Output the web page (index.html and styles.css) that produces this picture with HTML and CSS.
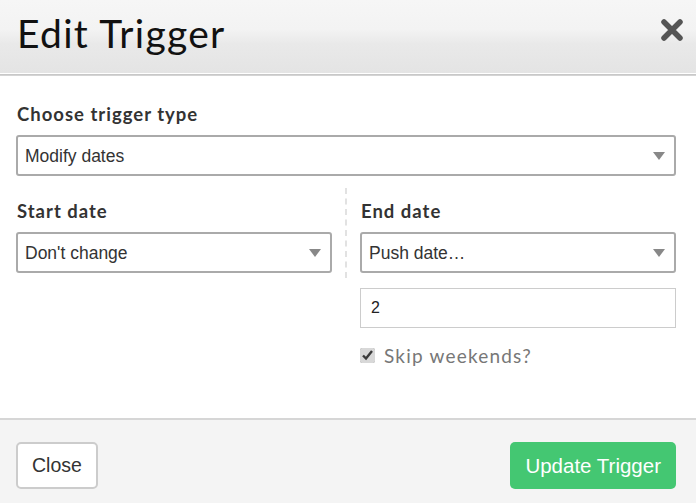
FILE: index.html
```html
<!DOCTYPE html>
<html lang="en">
<head>
    <meta charset="UTF-8">
    <meta name="viewport" content="width=device-width, initial-scale=1.0">
    <title>Edit Trigger</title>
    <link rel="stylesheet" href="styles.css">
</head>
<body>
    <div class="modal">
        <div class="modal-header">
            <h1>Edit Trigger</h1>
            <button class="close-x" aria-label="Close">
                <svg width="22" height="22" viewBox="0 0 22 22">
                    <path d="M3 3 L19 19 M19 3 L3 19" stroke="#555" stroke-width="5.5" stroke-linecap="round"/>
                </svg>
            </button>
        </div>

        <div class="modal-body">
            <label class="field-label" for="trigger-type">Choose trigger type</label>
            <div class="select-box">
                <select id="trigger-type">
                    <option>Modify dates</option>
                </select>
            </div>

            <div class="columns">
                <div class="col">
                    <label class="field-label" for="start-date">Start date</label>
                    <div class="select-box">
                        <select id="start-date">
                            <option>Don't change</option>
                        </select>
                    </div>
                </div>
                <div class="divider"></div>
                <div class="col">
                    <label class="field-label" for="end-date">End date</label>
                    <div class="select-box">
                        <select id="end-date">
                            <option>Push date…</option>
                        </select>
                    </div>
                    <input type="text" class="num-input" value="2">
                    <label class="check">
                        <input type="checkbox" checked>
                        <span>Skip weekends?</span>
                    </label>
                </div>
            </div>
        </div>

        <div class="modal-footer">
            <button class="btn">Close</button>
            <button class="btn btn-green">Update Trigger</button>
        </div>
    </div>
</body>
</html>
```

FILE: styles.css
```css
body {
    margin: 0;
    font-family: Lato, "Liberation Sans", sans-serif;
    background-color: #fff;
}

.modal {
    width: 696px;
    height: 503px;
    display: flex;
    flex-direction: column;
}

.modal-header {
    height: 73px;
    display: flex;
    align-items: center;
    justify-content: space-between;
    padding: 0 13px 0 17px;
    background: linear-gradient(#f6f6f6 0%, #f3f3f3 40%, #e9e9e9 60%, #e4e4e4 100%);
    border-bottom: 1px solid #fff;
    box-shadow: 0 1px 0 #c8c8c8, 0 2px 0 #d4d4d4;
}

.modal-header h1 {
    margin: 0;
    margin-top: -7px;
    font-size: 39px;
    font-weight: 400;
    color: #111;
    letter-spacing: 1.3px;
}

.close-x {
    background: none;
    border: none;
    padding: 0;
    margin-top: -10px;
    cursor: pointer;
}

.modal-body {
    flex: 1;
    padding: 27px 20px 0 16px;
    margin-top: 2px;
}

.field-label {
    display: block;
    font-size: 18.5px;
    font-weight: 700;
    color: #333;
    letter-spacing: 1px;
    margin: 0 0 10px 1px;
}

.select-box {
    position: relative;
}

.select-box::after {
    content: "";
    position: absolute;
    right: 11px;
    top: 17px;
    border-left: 6px solid transparent;
    border-right: 6px solid transparent;
    border-top: 8px solid #888;
    pointer-events: none;
}

select {
    width: 100%;
    height: 41px;
    padding: 0 7px;
    font-family: "Liberation Sans", Arial, sans-serif;
    font-size: 17.5px;
    color: #333;
    background: #fff;
    border: 2px solid #aaa;
    border-radius: 3px;
    appearance: none;
    box-sizing: border-box;
}

.columns {
    display: flex;
    margin-top: 12px;
}

.col {
    flex: 1;
    padding-top: 12px;
}

.divider {
    width: 0;
    height: 90px;
    margin: 0 13px;
    border-left: 2px dashed #e2e2e2;
}

.num-input {
    display: block;
    width: 100%;
    height: 40px;
    margin-top: 15px;
    padding: 0 10px;
    font-family: "Liberation Sans", Arial, sans-serif;
    font-size: 16px;
    color: #222;
    border: 1px solid #ccc;
    box-sizing: border-box;
}

.check {
    display: flex;
    align-items: center;
    gap: 9px;
    margin-top: 16px;
    font-size: 19px;
    letter-spacing: 1.2px;
    color: #777;
}

.check input {
    width: 15px;
    height: 15px;
    margin: 0;
    accent-color: #d8d8d8;
}

.modal-footer {
    height: 85px;
    display: flex;
    align-items: flex-start;
    justify-content: space-between;
    padding: 22px 20px 0 16px;
    box-sizing: border-box;
    background-color: #f4f4f4;
    border-top: 2px solid #d6d6d6;
}

.btn {
    height: 47px;
    padding: 0 14px;
    font-family: "Liberation Sans", Arial, sans-serif;
    font-size: 19.5px;
    color: #333;
    background-color: #fff;
    border: 2px solid #ccc;
    border-radius: 5px;
    cursor: pointer;
}

.btn-green {
    padding: 0 15px;
    font-size: 20.5px;
    color: #fff;
    background-color: #44c772;
    border: none;
}

.btn-green:hover {
    background-color: #3ab565;
}
```
